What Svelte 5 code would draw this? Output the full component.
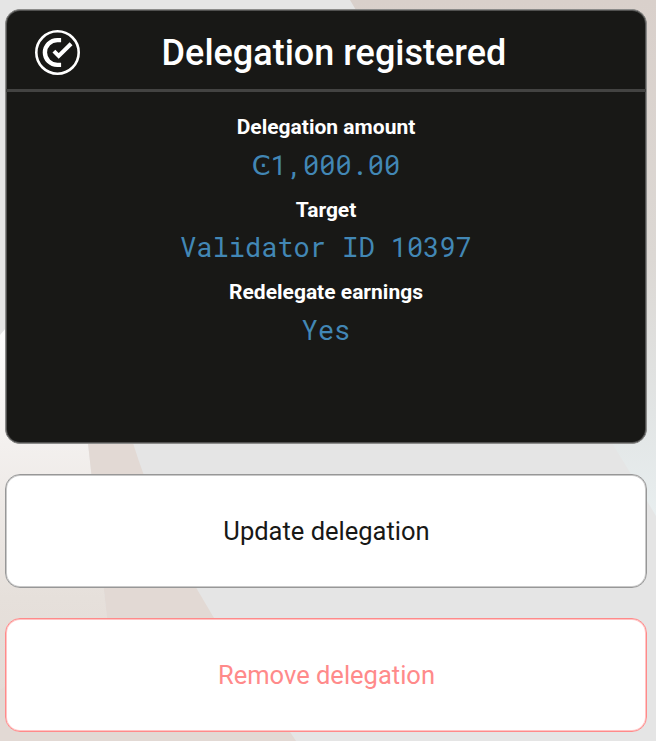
<script>
  const details = [
    { label: 'Delegation amount', symbol: 'Ͼ', value: '1,000.00' },
    { label: 'Target', value: 'Validator ID 10397' },
    { label: 'Redelegate earnings', value: 'Yes' }
  ];
</script>

<main>
  <svg class="backdrop" viewBox="0 0 656 741" aria-hidden="true">
    <defs>
      <linearGradient id="left" gradientUnits="userSpaceOnUse" x1="0" y1="330" x2="0" y2="741">
        <stop offset="0" stop-color="#fdfdfd" />
        <stop offset=".28" stop-color="#f3f0ee" />
        <stop offset=".65" stop-color="#e6e0db" />
        <stop offset="1" stop-color="#e2d9d4" />
      </linearGradient>
      <linearGradient id="right" gradientUnits="userSpaceOnUse" x1="0" y1="0" x2="0" y2="516">
        <stop offset="0" stop-color="#d9d0cb" />
        <stop offset=".5" stop-color="#dcd8d4" />
        <stop offset=".8" stop-color="#e2e5e5" />
        <stop offset="1" stop-color="#e8eeef" />
      </linearGradient>
    </defs>
    <path fill="url(#right)" d="M350 0H656V516L631 474L612 443Z" />
    <path fill="url(#left)" d="M0 335L6 328L88 443L107 618L120 741H0Z" />
    <path fill="#e2d9d4" d="M88 443H133Q160 530 214 618L296 741H0V690L107 618Z" />
  </svg>
  <section class="card">
    <header>
      <svg class="logo" viewBox="0.5 0.5 46 46" fill="none" stroke="#fff" aria-hidden="true">
        <circle cx="23" cy="23" r="21.2" stroke-width="2.6" />
        <path stroke-width="4.4" d="M26.6 10.6H22.8A12.4 12.4 0 0 0 22.8 35.4H26.6" />
        <path stroke-width="4" d="M19.4 21.7L24.2 26.5L36.6 14.3" />
      </svg>
      <h1>Delegation registered</h1>
    </header>
    <dl>
      {#each details as item}
        <dt>{item.label}</dt>
        <dd>{#if item.symbol}<span>{item.symbol}</span>{/if}{item.value}</dd>
      {/each}
    </dl>
  </section>
  <button>Update delegation</button>
  <button class="danger">Remove delegation</button>
</main>

<style>
  :global(body) { margin: 0; background: #e5e5e5; }
  main {
    position: relative;
    box-sizing: border-box;
    width: 656px;
    height: 741px;
    padding: 9px 9px 0 5px;
    display: flex;
    flex-direction: column;
    gap: 30px;
    overflow: hidden;
    font-family: Roboto, "Liberation Sans", sans-serif;
  }
  .backdrop { position: absolute; inset: 0; width: 656px; height: 741px; }
  .card, button {
    position: relative;
    box-sizing: border-box;
    width: 642px;
    border: 1px solid #979797;
    border-radius: 15px;
    box-shadow: inset 0 0 0 1px #c9c9c9;
  }
  .card {
    flex: 0 0 435px;
    background: #181816;
    border-color: #8b8b8a;
    box-shadow: inset 0 0 0 1px #515150;
    overflow: hidden;
    color: #fff;
  }
  header {
    box-sizing: border-box;
    height: 82px;
    border-bottom: 3px solid #434342;
    display: flex;
    align-items: center;
    padding-left: 28.8px;
  }
  .logo { width: 46px; height: 46px; flex: none; margin-top: 6.4px; }
  h1 { margin: 7px 0 0 80.8px; font-size: 36px; line-height: 42px; font-weight: 500; white-space: nowrap; }
  dl { margin: 0; padding-top: 22.2px; text-align: center; }
  dt { font-size: 21px; line-height: 26px; font-weight: 700; }
  dd {
    height: 36px;
    margin: 6.6px 0 13.9px;
    font: 27px/36px "Roboto Mono", "Liberation Mono", "DejaVu Sans Mono", monospace;
    color: #4287b5;
  }
  dd span { font-family: "DejaVu Sans", sans-serif; line-height: 1; }
  button {
    flex: 0 0 114px;
    background: #fff;
    color: #181816;
    font: 400 25.5px/32px Roboto, "Liberation Sans", sans-serif;
    padding: 0 0 0 1px;
  }
  button.danger { border-color: #ff8a8a; box-shadow: inset 0 0 0 1px #ffc4c4; color: #ff8a8a; }
</style>
